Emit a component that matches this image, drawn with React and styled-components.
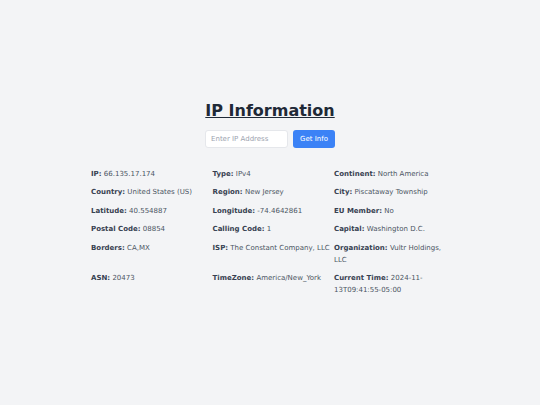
import React from 'react'
import styled, { createGlobalStyle } from 'styled-components'

const GlobalStyle = createGlobalStyle`
  body {
    margin: 0;
    background: #f3f4f6;
    font-family: "DejaVu Sans", sans-serif;
  }
`

const Page = styled.div`
  min-height: 100vh;
  display: flex;
  flex-direction: column;
  align-items: center;
  justify-content: center;
  padding-bottom: 8px;
  box-sizing: border-box;
`

const Title = styled.h1`
  color: #1f2937;
  font-size: 16px;
  font-weight: bold;
  text-decoration: underline;
  margin: 0 0 10px;
`

const Form = styled.div`
  display: flex;
  gap: 5px;
  margin-bottom: 20px;
`

const Input = styled.input`
  width: 83px;
  height: 18px;
  box-sizing: border-box;
  border: 1px solid #e5e7eb;
  border-radius: 3px;
  background: #fff;
  padding: 0 5px;
  font-family: inherit;
  font-size: 7px;
  outline: 0;

  &::placeholder {
    color: #9ca3af;
  }
`

const Button = styled.button`
  height: 18px;
  border: 0;
  border-radius: 3px;
  background: #3b82f6;
  color: #fff;
  font-family: inherit;
  font-size: 7px;
  padding: 0 7px;
`

const Grid = styled.div`
  display: grid;
  grid-template-columns: repeat(3, 118px);
  column-gap: 3.5px;
  row-gap: 6.5px;
  margin-left: 3px;
`

const Item = styled.div`
  font-size: 7px;
  line-height: 12px;
  color: #4b5563;
`

const Label = styled.strong`
  color: #374151;
  font-weight: bold;
`

const data = [
  ['IP', '66.135.17.174'],
  ['Type', 'IPv4'],
  ['Continent', 'North America'],
  ['Country', 'United States (US)'],
  ['Region', 'New Jersey'],
  ['City', 'Piscataway Township'],
  ['Latitude', '40.554887'],
  ['Longitude', '-74.4642861'],
  ['EU Member', 'No'],
  ['Postal Code', '08854'],
  ['Calling Code', '1'],
  ['Capital', 'Washington D.C.'],
  ['Borders', 'CA,MX'],
  ['ISP', 'The Constant Company, LLC'],
  ['Organization', 'Vultr Holdings, LLC'],
  ['ASN', '20473'],
  ['TimeZone', 'America/New_York'],
  ['Current Time', '2024-11-13T09:41:55-05:00'],
]

const App = () => (
  <Page>
    <GlobalStyle />
    <Title>IP Information</Title>
    <Form>
      <Input placeholder="Enter IP Address" />
      <Button>Get Info</Button>
    </Form>
    <Grid>
      {data.map(([label, value]) => (
        <Item key={label}>
          <Label>{label}:</Label> {value}
        </Item>
      ))}
    </Grid>
  </Page>
)

export default App
